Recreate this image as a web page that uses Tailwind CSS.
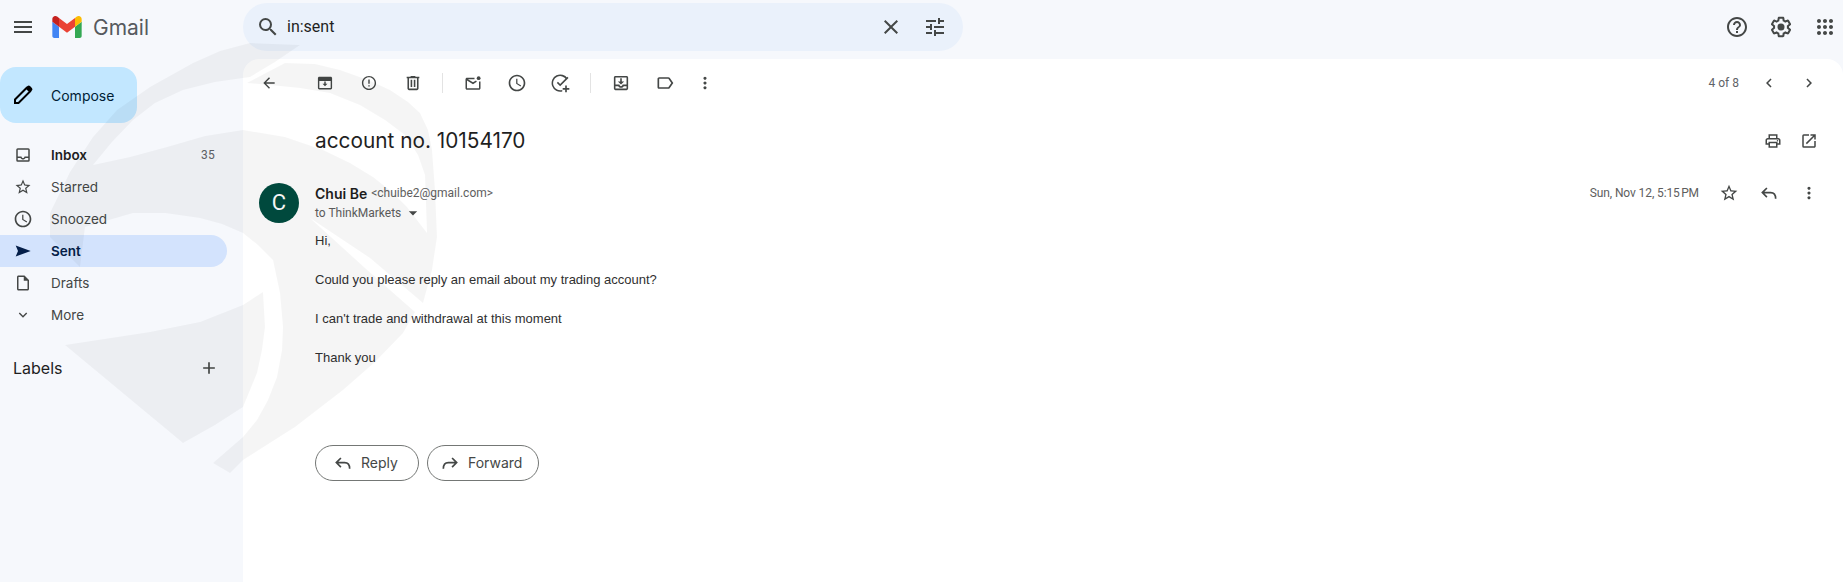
<!DOCTYPE html>
<html>
<head>
<meta charset="utf-8">
<title>Gmail</title>
<script src="https://cdn.jsdelivr.net/npm/@tailwindcss/browser@4"></script>
</head>
<body class="font-['Roboto','Liberation_Sans',sans-serif]">
<div class="relative w-[1843px] h-[582px] overflow-hidden bg-[#f6f8fc] text-[#444746]">
  <header class="flex items-start h-[59px]">
    <div class="flex items-center w-[243px] shrink-0 pl-[11px] h-[54px]">
      <svg class="w-6 h-6 fill-[#444746]" viewBox="0 0 24 24"><path d="M3 18h18v-2H3v2zm0-5h18v-2H3v2zm0-7v2h18V6H3z"/></svg>
      <svg class="ml-[17px] w-[30px] h-[22px]" viewBox="52 42 88 66"><path fill="#4285f4" d="M58 108h14V74L52 59v43c0 3.320 2.690 6 6 6"/><path fill="#34a853" d="M120 108h14c3.320 0 6-2.690 6-6V59l-20 15"/><path fill="#fbbc04" d="M120 48v26l20-15v-8c0-7.420-8.470-11.650-14.400-7.200"/><path fill="#ea4335" d="M72 74V48l24 18 24-18v26L96 92"/><path fill="#c5221f" d="M52 51v8l20 15V48l-5.600-4.200c-5.940-4.450-14.400-.220-14.400 7.200"/></svg>
      <span class="ml-[11px] text-[21px] leading-none text-[#565a5e] font-['Inter','Roboto',sans-serif]">Gmail</span>
    </div>
    <div class="flex items-center w-[720px] h-[48px] mt-[3px] rounded-full bg-[#eaf1fb] pl-[13px] pr-[16px]">
      <svg class="w-6 h-6 fill-[#444746]" viewBox="0 0 24 24"><path d="M15.500 14h-.790l-.280-.270A6.471 6.471 0 0 0 16 9.500 6.500 6.500 0 1 0 9.500 16c1.610 0 3.090-.590 4.230-1.570l.270.280v.790l5 4.990L20.490 19l-4.990-5zm-6 0C7.010 14 5 11.990 5 9.500S7.010 5 9.500 5 14 7.010 14 9.500 11.990 14 9.500 14z"/></svg>
      <span class="ml-[7px] text-[16px] text-[#1f1f1f]">in:sent</span>
      <svg class="ml-auto w-6 h-6 fill-[#444746]" viewBox="0 0 24 24"><path d="M19 6.410 17.590 5 12 10.590 6.410 5 5 6.410 10.590 12 5 17.590 6.410 19 12 13.410 17.590 19 19 17.590 13.410 12z"/></svg>
      <svg class="ml-[20px] w-6 h-6 fill-[#444746]" viewBox="0 0 24 24"><path d="M3 17v2h6v-2H3zM3 5v2h10V5H3zm10 16v-2h8v-2h-8v-2h-2v6h2zM7 9v2H3v2h4v2h2V9H7zm14 4v-2H11v2h10zm-6-4h2V7h4V5h-4V3h-2v6z"/></svg>
    </div>
    <div class="ml-auto flex items-center gap-[20px] pr-[6px] mt-[15px]">
      <svg class="w-6 h-6 fill-[#444746]" viewBox="0 0 24 24"><path d="M11 18h2v-2h-2v2zm1-16C6.480 2 2 6.480 2 12s4.480 10 10 10 10-4.480 10-10S17.520 2 12 2zm0 18c-4.410 0-8-3.590-8-8s3.590-8 8-8 8 3.590 8 8-3.590 8-8 8zm0-14c-2.210 0-4 1.790-4 4h2c0-1.100.900-2 2-2s2 .900 2 2c0 2-3 1.750-3 5h2c0-2.250 3-2.500 3-5 0-2.210-1.790-4-4-4z"/></svg>
      <svg class="w-6 h-6 fill-[#444746]" viewBox="0 0 24 24"><path d="M13.850 22.250h-3.700c-.740 0-1.360-.540-1.470-1.270l-.270-1.890c-.270-.140-.530-.290-.790-.460l-1.800.720c-.700.260-1.470-.030-1.810-.650L2.200 15.530c-.350-.660-.200-1.440.360-1.880l1.530-1.190c-.010-.150-.020-.300-.020-.460 0-.150.010-.310.020-.460l-1.520-1.190c-.590-.450-.740-1.260-.370-1.880l1.850-3.190c.340-.620 1.110-.900 1.790-.630l1.810.730c.260-.170.520-.320.780-.460l.270-1.910c.100-.700.720-1.260 1.460-1.260h3.700c.740 0 1.360.540 1.470 1.270l.270 1.890c.270.140.530.290.790.460l1.800-.720c.710-.260 1.480.030 1.820.650l1.840 3.180c.360.660.200 1.440-.360 1.880l-1.520 1.190c.010.150.020.300.020.460s-.010.310-.020.460l1.520 1.190c.560.450.720 1.230.370 1.860l-1.860 3.220c-.340.620-1.110.900-1.800.630l-1.800-.720c-.260.170-.520.320-.780.460l-.270 1.910c-.100.680-.720 1.220-1.460 1.220zm-3.230-2h2.750l.370-2.550.530-.220c.440-.180.880-.440 1.340-.780l.450-.340 2.380.960 1.370-2.380-2.030-1.580.070-.560c.030-.260.060-.530.060-.800s-.030-.550-.060-.790l-.070-.560 2.030-1.580-1.390-2.380-2.390.960-.450-.350c-.420-.320-.870-.580-1.330-.770l-.520-.220-.370-2.550h-2.750l-.370 2.550-.530.210c-.440.190-.880.440-1.340.790l-.450.330-2.380-.950-1.390 2.370 2.030 1.580-.070.560c-.030.260-.060.530-.060.800s.020.530.060.790l.070.560-2.030 1.580 1.370 2.380 2.390-.960.450.350c.430.330.860.580 1.330.770l.530.220.380 2.550z"/><circle cx="12" cy="12" r="3.500"/></svg>
      <svg class="w-6 h-6 fill-[#444746]" viewBox="0 0 24 24"><path d="M6 8c1.100 0 2-.900 2-2s-.900-2-2-2-2 .900-2 2 .900 2 2 2zm6 12c1.100 0 2-.900 2-2s-.900-2-2-2-2 .900-2 2 .900 2 2 2zm-6 0c1.100 0 2-.900 2-2s-.900-2-2-2-2 .900-2 2 .900 2 2 2zm0-6c1.100 0 2-.900 2-2s-.900-2-2-2-2 .900-2 2 .900 2 2 2zm6 0c1.100 0 2-.900 2-2s-.900-2-2-2-2 .900-2 2 .900 2 2 2zm4-8c0 1.100.900 2 2 2s2-.900 2-2-.900-2-2-2-2 .900-2 2zm-4 2c1.100 0 2-.900 2-2s-.900-2-2-2-2 .900-2 2 .900 2 2 2zm6 6c1.100 0 2-.900 2-2s-.900-2-2-2-2 .900-2 2 .900 2 2 2zm0 6c1.100 0 2-.900 2-2s-.900-2-2-2-2 .900-2 2 .900 2 2 2z"/></svg>
    </div>
  </header>

  <div class="flex h-[523px]">
    <aside class="w-[243px] shrink-0 font-['Inter','Roboto',sans-serif]">
      <button class="flex items-center w-[137px] h-[56px] mt-[8px] rounded-[16px] bg-[#c2e7ff] pl-[11px] text-[14px] text-[#001d35]">
        <svg class="w-6 h-6" viewBox="0 0 24 24"><path class="fill-none stroke-black stroke-2" d="M4 20v-3.500L15.500 5l3.500 3.500L7.500 20z"/><path class="fill-black" d="M15 4.500l1.500-1.400a1.800 1.800 0 0 1 2.500 0l1.900 1.900a1.800 1.800 0 0 1 0 2.500L19.500 9z"/></svg>
        <span class="ml-[16px]">Compose</span>
      </button>
      <nav class="mt-[16px] w-[227px] text-[13.500px] leading-[32px]">
        <div class="flex items-center h-[32px] pl-[11px] pr-[12px] font-semibold text-[#1f1f1f]">
          <svg class="w-6 h-6 p-[3px] fill-[#444746]" viewBox="0 0 24 24"><path d="M19 3H5a2 2 0 0 0-2 2v14a2 2 0 0 0 2 2h14a2 2 0 0 0 2-2V5a2 2 0 0 0-2-2zm0 16H5v-3h3.560c.690 1.190 1.970 2 3.450 2s2.750-.810 3.450-2H19v3zm0-5h-4.990c0 1.100-.900 2-2 2s-2-.900-2-2H5V5h14v9z"/></svg>
          <span class="ml-[16px]">Inbox</span>
          <span class="ml-auto text-[12px] font-normal text-[#5f6368] font-['Roboto',sans-serif] tracking-[0.3px]">35</span>
        </div>
        <div class="flex items-center h-[32px] pl-[11px]">
          <svg class="w-6 h-6 p-[3px] fill-[#444746]" viewBox="0 0 24 24"><path d="M22 9.240l-7.190-.620L12 2 9.190 8.630 2 9.240l5.460 4.730L5.820 21 12 17.270 18.180 21l-1.630-7.030L22 9.240zM12 15.400l-3.760 2.270 1-4.280-3.320-2.880 4.380-.380L12 6.100l1.710 4.040 4.380.380-3.320 2.880 1 4.280L12 15.400z"/></svg>
          <span class="ml-[16px]">Starred</span>
        </div>
        <div class="flex items-center h-[32px] pl-[11px]">
          <svg class="w-6 h-6 p-[2px] fill-[#444746]" viewBox="0 0 24 24"><path d="M11.990 2C6.470 2 2 6.480 2 12s4.470 10 9.990 10C17.520 22 22 17.520 22 12S17.520 2 11.990 2zM12 20c-4.420 0-8-3.580-8-8s3.580-8 8-8 8 3.580 8 8-3.580 8-8 8zm.500-13H11v6l5.250 3.150.750-1.230-4.500-2.670z"/></svg>
          <span class="ml-[16px]">Snoozed</span>
        </div>
        <div class="flex items-center h-[32px] pl-[11px] rounded-r-full bg-[#d3e3fd] text-[#041e49]">
          <svg class="w-6 h-6 fill-[#041e49]" viewBox="0 0 24 24"><path d="M4.700 6.500 19.700 12 4.700 17.500 7 12z"/></svg>
          <span class="ml-[16px] font-semibold">Sent</span>
        </div>
        <div class="flex items-center h-[32px] pl-[11px]">
          <svg class="w-6 h-6 p-[3px] fill-[#444746]" viewBox="0 0 24 24"><path d="M14 2H6c-1.100 0-1.990.900-1.990 2L4 20c0 1.100.890 2 1.990 2H18c1.100 0 2-.900 2-2V8l-6-6zM6 20V4h7v5h5v11H6z"/></svg>
          <span class="ml-[16px]">Drafts</span>
        </div>
        <div class="flex items-center h-[32px] pl-[11px]">
          <svg class="w-6 h-6 fill-[#444746]" viewBox="0 0 24 24"><path d="M16.590 8.590 12 13.170 7.410 8.590 6 10l6 6 6-6z" transform="translate(3.600 3.600) scale(.7)"/></svg>
          <span class="ml-[16px]">More</span>
        </div>
      </nav>
      <div class="flex items-center justify-between mt-[21px] pl-[13px] pr-[8px] w-[227px] h-[32px]">
        <span class="text-[16px] text-[#1f1f1f]">Labels</span>
        <svg class="w-5 h-5 fill-[#444746]" viewBox="0 0 24 24"><path d="M19 13h-6v6h-2v-6H5v-2h6V5h2v6h6v2z"/></svg>
      </div>
    </aside>

    <main class="relative flex-1 bg-white rounded-t-[16px]">
      <div class="flex items-center h-[48px] pl-[16px] pr-[24px]">
        <svg class="w-5 h-5 p-[1.500px] fill-[#444746]" viewBox="0 0 24 24"><path d="M20 11H7.830l5.590-5.590L12 4l-8 8 8 8 1.410-1.410L7.830 13H20v-2z"/></svg>
        <div class="flex items-center gap-[24px] ml-[36px]">
          <svg class="w-5 h-5 p-[1.500px] fill-[#444746]" viewBox="0 0 24 24"><path fill-rule="evenodd" d="M20 3H4c-1.100 0-2 .900-2 2v14c0 1.100.900 2 2 2h16c1.100 0 2-.900 2-2V5c0-1.100-.900-2-2-2zM4 19V9h16v10H4zM13 10h-2v3H8.500l3.500 3.500 3.500-3.500H13v-3z"/></svg>
          <svg class="w-5 h-5 p-[1.500px] fill-[#444746]" viewBox="0 0 24 24"><path d="M12 2C6.480 2 2 6.480 2 12s4.480 10 10 10 10-4.480 10-10S17.520 2 12 2zm0 18c-4.410 0-8-3.590-8-8s3.590-8 8-8 8 3.590 8 8-3.590 8-8 8zm-1-5h2v2h-2zm0-8h2v6h-2z"/></svg>
          <svg class="w-5 h-5 p-[.500px] fill-[#444746]" viewBox="0 0 24 24"><path d="M15 4V3H9v1H4v2h1v13c0 1.100.900 2 2 2h10c1.100 0 2-.900 2-2V6h1V4h-5zm2 15H7V6h10v13zM9 8h2v9H9zm4 0h2v9h-2z"/></svg>
        </div>
        <div class="w-px h-5 bg-[#e3e3e3] ml-[19px] mr-[20px]"></div>
        <div class="flex items-center gap-[24px]">
          <svg class="w-5 h-5 p-[1px] fill-[#444746]" viewBox="0 0 24 24"><path d="M14 5H4c-1.100 0-2 .900-2 2v12c0 1.100.900 2 2 2h16c1.100 0 2-.900 2-2V10h-2v9H4V8.500l8 5 5.100-3.200-1.060-1.700L12 11.100 5.200 7H14V5z"/><circle cx="19.500" cy="5.500" r="2.500"/></svg>
          <svg class="w-5 h-5 fill-[#444746]" viewBox="0 0 24 24"><path d="M11.990 2C6.470 2 2 6.480 2 12s4.470 10 9.990 10C17.520 22 22 17.520 22 12S17.520 2 11.990 2zM12 20c-4.420 0-8-3.580-8-8s3.580-8 8-8 8 3.580 8 8-3.580 8-8 8zm.500-13H11v6l5.250 3.150.750-1.230-4.500-2.670z"/></svg>
          <svg class="w-5 h-5 fill-[#444746]" viewBox="0 0 24 24"><path d="M13.500 20.400A8.500 8.500 0 1 1 18.400 8l1.500-1.400A10.400 10.400 0 1 0 13.500 22.300zM8.300 10.600 7 12l4 4 10-10-1.400-1.400-8.600 8.600zM19 15h-2v3h-3v2h3v3h2v-3h3v-2h-3z"/></svg>
        </div>
        <div class="w-px h-5 bg-[#e3e3e3] ml-[19px] mr-[20px]"></div>
        <div class="flex items-center gap-[24px]">
          <svg class="w-5 h-5 p-[.500px] fill-[#444746]" viewBox="0 0 24 24"><path d="M19 3H5c-1.100 0-2 .900-2 2v14c0 1.100.900 2 2 2h14c1.100 0 2-.900 2-2V5c0-1.100-.900-2-2-2zm0 16H5v-3h3.560c.690 1.190 1.970 2 3.450 2s2.750-.810 3.450-2H19v3zm0-5h-4.990c0 1.100-.900 2-2 2s-2-.900-2-2H5V5h14v9zM13 6h-2v4H8l4 4 4-4h-3V6z"/></svg>
          <svg class="w-5 h-5 fill-[#444746]" viewBox="0 0 24 24"><path d="M17.630 5.840C17.270 5.330 16.670 5 16 5L5 5.010C3.900 5.010 3 5.900 3 7v10c0 1.100.900 1.990 2 1.990L16 19c.670 0 1.270-.330 1.630-.840L22 12l-4.370-6.160zM16 17H5V7h11l3.550 5L16 17z"/></svg>
          <svg class="-ml-[4px] w-5 h-5 p-[.500px] fill-[#444746]" viewBox="0 0 24 24"><path d="M12 8c1.100 0 2-.900 2-2s-.900-2-2-2-2 .900-2 2 .900 2 2 2zm0 2c-1.100 0-2 .900-2 2s.900 2 2 2 2-.900 2-2-.900-2-2-2zm0 6c-1.100 0-2 .900-2 2s.900 2 2 2 2-.900 2-2-.900-2-2-2z"/></svg>
        </div>
        <div class="ml-auto flex items-center">
          <span class="text-[12px] text-[#5f6368] mr-[20px]">4 of 8</span>
          <svg class="w-5 h-5 p-[1px] fill-[#444746]" viewBox="0 0 24 24"><path d="M15.410 7.410 14 6l-6 6 6 6 1.410-1.410L10.830 12z"/></svg>
          <svg class="ml-[20px] w-5 h-5 p-[1px] fill-[#444746]" viewBox="0 0 24 24"><path d="M10 6 8.590 7.410 13.170 12l-4.580 4.590L10 18l6-6z"/></svg>
        </div>
      </div>

      <div class="flex items-center justify-between h-[40px] mt-[14px] pl-[72px] pr-[24px]">
        <h1 class="text-[20.800px] text-[#1f1f1f] font-['Inter','Roboto',sans-serif]">account no. 10154170</h1>
        <div class="flex items-center gap-[16px]">
          <svg class="w-5 h-5 p-[1px] fill-[#444746]" viewBox="0 0 24 24"><path d="M19 8h-1V3H6v5H5c-1.660 0-3 1.340-3 3v6h4v4h12v-4h4v-6c0-1.660-1.340-3-3-3zM8 5h8v3H8V5zm8 14H8v-4h8v4zm2-4v-2H6v2H4v-4c0-.550.450-1 1-1h14c.550 0 1 .450 1 1v4h-2z"/><circle cx="18" cy="11.500" r="1"/></svg>
          <svg class="w-5 h-5 p-[1px] fill-[#444746]" viewBox="0 0 24 24"><path d="M19 19H5V5h7V3H5a2 2 0 0 0-2 2v14a2 2 0 0 0 2 2h14c1.100 0 2-.900 2-2v-7h-2v7zM14 3v2h3.590l-9.830 9.830 1.410 1.410L19 6.410V10h2V3h-7z"/></svg>
        </div>
      </div>

      <div class="flex mt-[22px] pl-[16px] pr-[24px]">
        <div class="flex items-center justify-center w-10 h-10 shrink-0 rounded-full bg-[#004d40] text-white text-[22px] leading-none">C</div>
        <div class="ml-[16px] flex-1">
          <div class="flex items-center h-[20px]">
            <span class="text-[14px] font-semibold text-[#1f1f1f] font-['Inter','Roboto',sans-serif]">Chui Be</span>
            <span class="ml-[4px] text-[12px] text-[#5e5e5e]">&lt;chuibe2@gmail.com&gt;</span>
            <span class="ml-auto text-[12px] text-[#5e5e5e] tracking-[-0.1px]">Sun, Nov 12, 5:15&#8239;PM</span>
            <svg class="ml-[20px] w-5 h-5 fill-[#444746]" viewBox="0 0 24 24"><path d="M22 9.240l-7.190-.620L12 2 9.190 8.630 2 9.240l5.460 4.730L5.820 21 12 17.270 18.180 21l-1.630-7.030L22 9.240zM12 15.400l-3.760 2.270 1-4.280-3.320-2.880 4.380-.380L12 6.100l1.710 4.040 4.380.380-3.320 2.880 1 4.280L12 15.400z"/></svg>
            <svg class="ml-[20px] w-5 h-5 fill-none stroke-[#444746] stroke-2" viewBox="0 0 24 24"><path d="M9.500 6 4 11.500 9.500 17M4 11.500h10c3.500 0 6 2.500 6 7.500"/></svg>
            <svg class="ml-[20px] w-5 h-5 p-[.500px] fill-[#444746]" viewBox="0 0 24 24"><path d="M12 8c1.100 0 2-.900 2-2s-.900-2-2-2-2 .900-2 2 .900 2 2 2zm0 2c-1.100 0-2 .900-2 2s.900 2 2 2 2-.900 2-2-.900-2-2-2zm0 6c-1.100 0-2 .900-2 2s.900 2 2 2 2-.900 2-2-.900-2-2-2z"/></svg>
          </div>
          <div class="flex items-center h-[20px] text-[12px] text-[#5e5e5e]">
            <span>to ThinkMarkets</span>
            <svg class="ml-[2px] w-5 h-5 fill-[#444746]" viewBox="0 0 24 24"><path d="m7 10 5 5 5-5z"/></svg>
          </div>
          <div class="mt-[8px] text-[13px] leading-[19.500px] text-[#303030] font-['Liberation_Sans',sans-serif]">
            <p>Hi,</p>
            <p class="mt-[19.500px]">Could you please reply an email about my trading account?</p>
            <p class="mt-[19.500px]">I can't trade and withdrawal at this moment</p>
            <p class="mt-[19.500px]">Thank you</p>
          </div>
          <div class="flex gap-[8px] mt-[77px] font-['Inter','Roboto',sans-serif]">
            <button class="flex items-center h-[36px] w-[104px] pl-[17px] rounded-full border border-[#747775] text-[14px] text-[#444746]">
              <svg class="w-5 h-5 fill-none stroke-[#444746] stroke-2" viewBox="0 0 24 24"><path d="M9.500 6 4 11.500 9.500 17M4 11.500h10c3.500 0 6 2.500 6 7.500"/></svg>
              <span class="ml-[8px]">Reply</span>
            </button>
            <button class="flex items-center h-[36px] w-[112px] pl-[12px] rounded-full border border-[#747775] text-[14px] text-[#444746]">
              <svg class="w-5 h-5 fill-none stroke-[#444746] stroke-2" viewBox="0 0 24 24"><path d="M14.500 6 20 11.500 14.500 17M20 11.500H10c-3.500 0-6 2.500-6 7.500"/></svg>
              <span class="ml-[8px]">Forward</span>
            </button>
          </div>
        </div>
      </div>
    </main>
  </div>

  <svg class="absolute inset-0 w-[1843px] h-[582px] pointer-events-none fill-black/[0.04]" viewBox="0 0 1843 582">
    <path d="M247 83 L285 63 L315 64 L340 70 L368 80 L390 90 L408 102 L420 113 L428 130 L432 150 L435 190 L437 237 L432 270 L423 303 L370 258 L310 218 L365 268 L415 312 L403 333 L375 362 L343 390 L295 427 L243 460 L230 473 L213 463 L243 437 L257 420 L268 400 L277 377 L282 350 L283 327 L280 293 L273 260 L258 245 L243 233 L222 224 L200 218 L165 213 L133 213 L85 227 L80 267 L50 237 L50 213 L70 172 L93 137 L117 110 L150 87 L193 63 L220 51 L250 43 L300 45 L275 62 L250 77 L215 82 L183 90 L155 103 L133 120 L112 142 L93 165 L130 157 L167 147 L205 136 L243 130 L285 137 L323 150 L350 163 L373 177 L392 192 L407 207 L427 233 L425 175 L418 155 L405 135 L385 120 L360 105 L330 93 L300 88 L270 85 Z"/>
    <path d="M65 345 L150 332 L200 322 L243 305 L263 292 L265 327 L262 350 L257 373 L243 407 L215 425 L183 443 Z"/>
  </svg>
</div>
</body>
</html>
